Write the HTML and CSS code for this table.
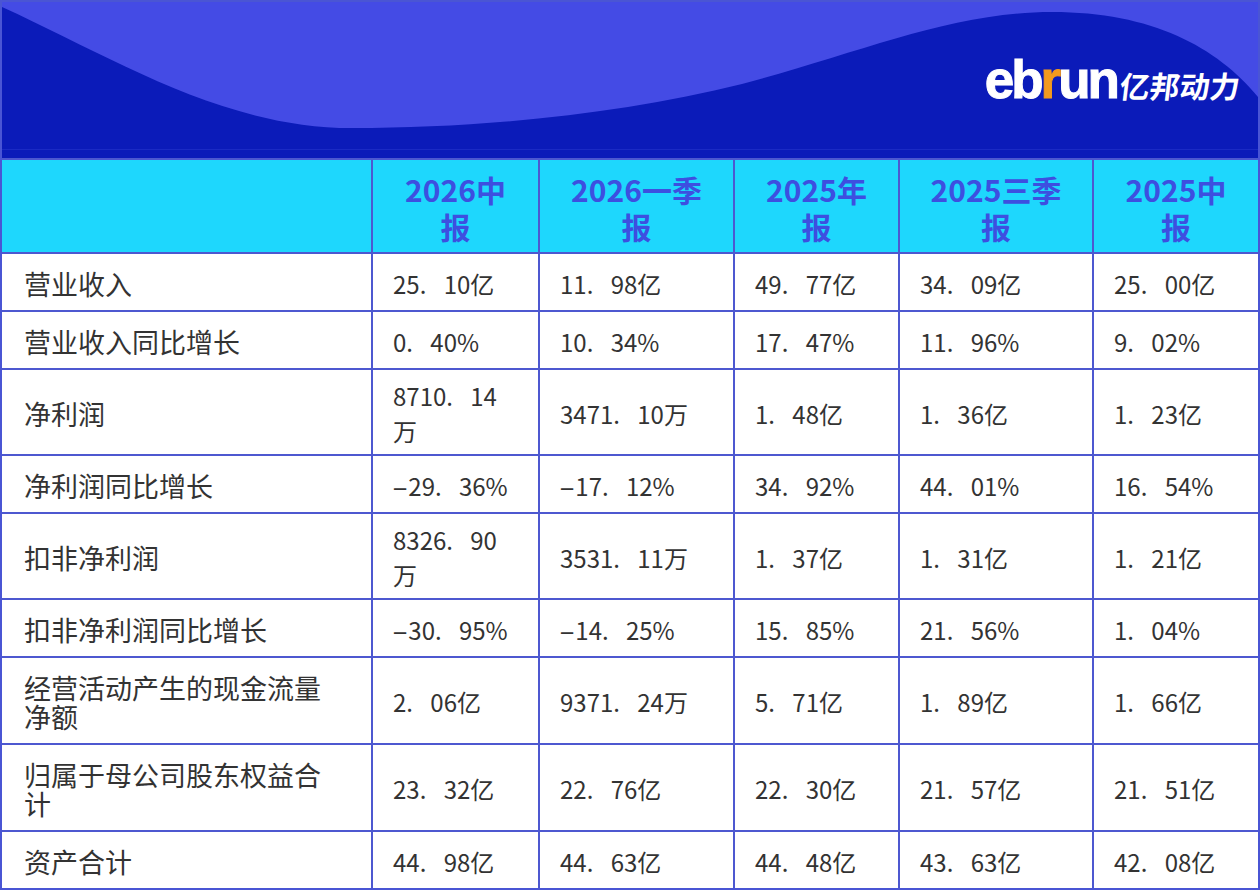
FILE: index.html
```html
<!DOCTYPE html>
<html lang="zh-CN">
<head>
<meta charset="utf-8">
<title>财务数据</title>
<link rel="stylesheet" href="styles.css">
</head>
<body>
<div class="page">
  <div class="banner">
    <svg class="wave" width="1256" height="156" viewBox="0 0 1256 156" preserveAspectRatio="none" aria-hidden="true">
      <rect x="0" y="0" width="1256" height="156" fill="#0b1bb9"/>
      <path d="M0 0 H1256 V95 C1215 45 1150 10 1050 10 C950 10 860 50 740 82 C620 112 480 126 350 126 C220 126 110 55 0 5 Z" fill="#444be5"/>
      <rect x="0" y="147" width="1256" height="1" fill="#1a2ac4"/>
    </svg>
    <div class="logo"><span class="logo-en">eb<span class="logo-r">r</span>un</span><span class="logo-cn">亿邦动力</span></div>
  </div>
  <div class="grid">
    <div class="c h"></div>
    <div class="c h"><span class="t">2026中报</span></div>
    <div class="c h"><span class="t">2026一季报</span></div>
    <div class="c h"><span class="t">2025年报</span></div>
    <div class="c h"><span class="t">2025三季报</span></div>
    <div class="c h"><span class="t">2025中报</span></div>

    <div class="c lab"><span class="t">营业收入</span></div>
    <div class="c"><span class="t">25<span class="pt">.</span>10亿</span></div>
    <div class="c"><span class="t">11<span class="pt">.</span>98亿</span></div>
    <div class="c"><span class="t">49<span class="pt">.</span>77亿</span></div>
    <div class="c"><span class="t">34<span class="pt">.</span>09亿</span></div>
    <div class="c"><span class="t">25<span class="pt">.</span>00亿</span></div>

    <div class="c lab"><span class="t">营业收入同比增长</span></div>
    <div class="c"><span class="t">0<span class="pt">.</span>40%</span></div>
    <div class="c"><span class="t">10<span class="pt">.</span>34%</span></div>
    <div class="c"><span class="t">17<span class="pt">.</span>47%</span></div>
    <div class="c"><span class="t">11<span class="pt">.</span>96%</span></div>
    <div class="c"><span class="t">9<span class="pt">.</span>02%</span></div>

    <div class="c lab"><span class="t">净利润</span></div>
    <div class="c"><span class="t">8710<span class="pt">.</span>14<span class="u">万</span></span></div>
    <div class="c"><span class="t">3471<span class="pt">.</span>10<span class="u">万</span></span></div>
    <div class="c"><span class="t">1<span class="pt">.</span>48亿</span></div>
    <div class="c"><span class="t">1<span class="pt">.</span>36亿</span></div>
    <div class="c"><span class="t">1<span class="pt">.</span>23亿</span></div>

    <div class="c lab"><span class="t">净利润同比增长</span></div>
    <div class="c"><span class="t"><span class="mn">-</span>29<span class="pt">.</span>36%</span></div>
    <div class="c"><span class="t"><span class="mn">-</span>17<span class="pt">.</span>12%</span></div>
    <div class="c"><span class="t">34<span class="pt">.</span>92%</span></div>
    <div class="c"><span class="t">44<span class="pt">.</span>01%</span></div>
    <div class="c"><span class="t">16<span class="pt">.</span>54%</span></div>

    <div class="c lab"><span class="t">扣非净利润</span></div>
    <div class="c"><span class="t">8326<span class="pt">.</span>90<span class="u">万</span></span></div>
    <div class="c"><span class="t">3531<span class="pt">.</span>11<span class="u">万</span></span></div>
    <div class="c"><span class="t">1<span class="pt">.</span>37亿</span></div>
    <div class="c"><span class="t">1<span class="pt">.</span>31亿</span></div>
    <div class="c"><span class="t">1<span class="pt">.</span>21亿</span></div>

    <div class="c lab"><span class="t">扣非净利润同比增长</span></div>
    <div class="c"><span class="t"><span class="mn">-</span>30<span class="pt">.</span>95%</span></div>
    <div class="c"><span class="t"><span class="mn">-</span>14<span class="pt">.</span>25%</span></div>
    <div class="c"><span class="t">15<span class="pt">.</span>85%</span></div>
    <div class="c"><span class="t">21<span class="pt">.</span>56%</span></div>
    <div class="c"><span class="t">1<span class="pt">.</span>04%</span></div>

    <div class="c lab"><span class="t">经营活动产生的现金流量净额</span></div>
    <div class="c"><span class="t">2<span class="pt">.</span>06亿</span></div>
    <div class="c"><span class="t">9371<span class="pt">.</span>24<span class="u">万</span></span></div>
    <div class="c"><span class="t">5<span class="pt">.</span>71亿</span></div>
    <div class="c"><span class="t">1<span class="pt">.</span>89亿</span></div>
    <div class="c"><span class="t">1<span class="pt">.</span>66亿</span></div>

    <div class="c lab"><span class="t">归属于母公司股东权益合计</span></div>
    <div class="c"><span class="t">23<span class="pt">.</span>32亿</span></div>
    <div class="c"><span class="t">22<span class="pt">.</span>76亿</span></div>
    <div class="c"><span class="t">22<span class="pt">.</span>30亿</span></div>
    <div class="c"><span class="t">21<span class="pt">.</span>57亿</span></div>
    <div class="c"><span class="t">21<span class="pt">.</span>51亿</span></div>

    <div class="c lab"><span class="t">资产合计</span></div>
    <div class="c"><span class="t">44<span class="pt">.</span>98亿</span></div>
    <div class="c"><span class="t">44<span class="pt">.</span>63亿</span></div>
    <div class="c"><span class="t">44<span class="pt">.</span>48亿</span></div>
    <div class="c"><span class="t">43<span class="pt">.</span>63亿</span></div>
    <div class="c"><span class="t">42<span class="pt">.</span>08亿</span></div>
  </div>
</div>
</body>
</html>
```

FILE: styles.css
```css
html, body {
  margin: 0;
  padding: 0;
  background: #ffffff;
}

body {
  font-family: "Noto Sans CJK SC", "Noto Sans", sans-serif;
}

.page {
  width: 1260px;
  box-sizing: border-box;
  border: 2px solid #4a55d4;
}

.banner {
  display: grid;
  width: 1256px;
  height: 156px;
  overflow: hidden;
}

.wave {
  grid-area: 1 / 1;
  display: block;
}

.logo {
  grid-area: 1 / 1;
  justify-self: end;
  align-self: start;
  margin-top: 52px;
  margin-right: 18px;
  display: flex;
  align-items: baseline;
  color: #ffffff;
  line-height: 52px;
}

.logo-en {
  font-family: "Liberation Sans", Arial, sans-serif;
  font-weight: 700;
  font-size: 53px;
  letter-spacing: -3px;
  -webkit-text-stroke: 1px #ffffff;
}

.logo-r {
  color: #f39a1e;
  -webkit-text-stroke: 1px #f39a1e;
}

.logo-cn {
  display: inline-block;
  font-family: "Noto Sans CJK SC", sans-serif;
  font-weight: 700;
  font-size: 30px;
  transform: skewX(-7deg);
  margin-left: 3px;
}

.grid {
  display: grid;
  grid-template-columns: 369px 165px 193px 163px 192px 164px;
  gap: 2px;
  padding-top: 2px;
  background: #4d58d0;
}

.c {
  background: #ffffff;
  display: flex;
  align-items: center;
  padding: 8px 28px 6px 20px;
  font-size: 24px;
  line-height: 35px;
  color: #333333;
}

.t {
  display: block;
}

.lab {
  padding: 15px 30px 12px 22px;
  font-size: 27px;
  line-height: 29px;
}

.h {
  background: #1ed7fd;
  justify-content: center;
  text-align: center;
  padding: 11px 24px 7px;
  font-size: 30px;
  line-height: 37px;
  font-weight: 700;
  color: #3d4fe0;
}

.pt {
  display: inline-block;
  width: 1em;
  text-align: left;
}

.mn {
  display: inline-block;
  transform: scaleX(2);
  margin: 0 4px 0 3px;
}
```
